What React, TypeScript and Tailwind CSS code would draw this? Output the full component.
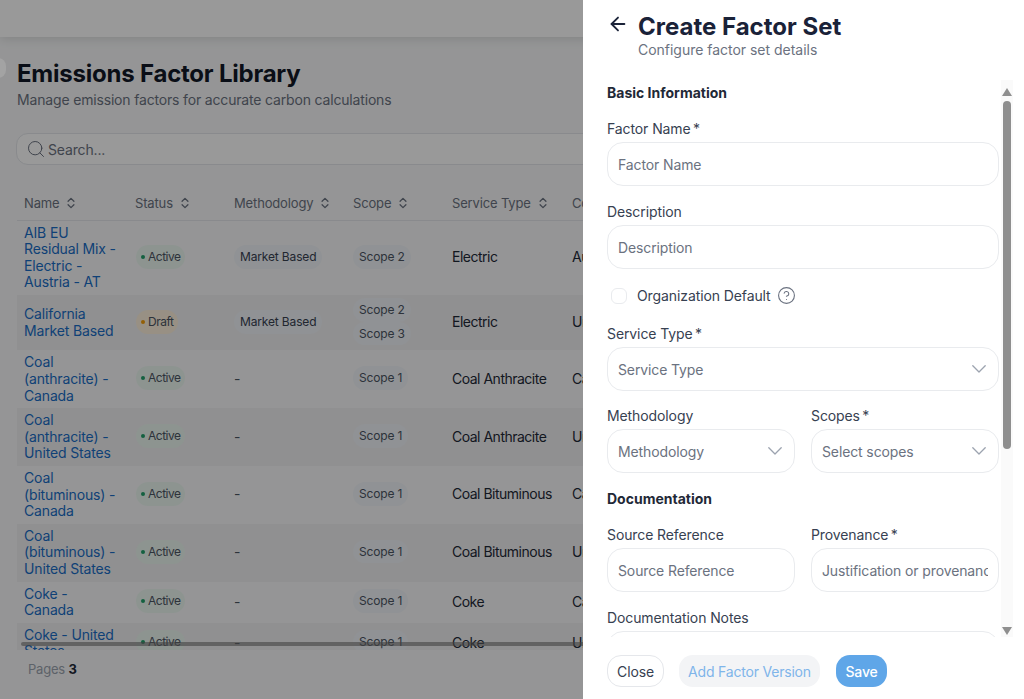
import { ArrowLeft, ChevronsUpDown, CircleHelp, Search } from "lucide-react";

type Row = { name: string; status: "Active" | "Draft"; method: string; scopes: string[]; service: string; country: string };

const rows: Row[] = [
  { name: "AIB EU\nResidual Mix -\nElectric -\nAustria - AT", status: "Active", method: "Market Based", scopes: ["Scope 2"], service: "Electric", country: "Austria" },
  { name: "California\nMarket Based", status: "Draft", method: "Market Based", scopes: ["Scope 2", "Scope 3"], service: "Electric", country: "United States" },
  { name: "Coal\n(anthracite) -\nCanada", status: "Active", method: "-", scopes: ["Scope 1"], service: "Coal Anthracite", country: "Canada" },
  { name: "Coal\n(anthracite) -\nUnited States", status: "Active", method: "-", scopes: ["Scope 1"], service: "Coal Anthracite", country: "United States" },
  { name: "Coal\n(bituminous) -\nCanada", status: "Active", method: "-", scopes: ["Scope 1"], service: "Coal Bituminous", country: "Canada" },
  { name: "Coal\n(bituminous) -\nUnited States", status: "Active", method: "-", scopes: ["Scope 1"], service: "Coal Bituminous", country: "United States" },
  { name: "Coke -\nCanada", status: "Active", method: "-", scopes: ["Scope 1"], service: "Coke", country: "Canada" },
  { name: "Coke - United\nStates", status: "Active", method: "-", scopes: ["Scope 1"], service: "Coke", country: "United States" },
];

const heads = [
  { label: "Name", cls: "w-[110px] pl-[7px]" },
  { label: "Status", cls: "w-[99px] pl-[8px]" },
  { label: "Methodology", cls: "w-[119px] pl-[8px]" },
  { label: "Scope", cls: "w-[99px] pl-[8px]" },
  { label: "Service Type", cls: "w-[120px] pl-[8px]" },
  { label: "Country", cls: "w-[160px] pl-[8px]" },
];

function Chevron() {
  return (
    <svg width="14" height="8" viewBox="0 0 14 8" fill="none" stroke="#9ca3af" strokeWidth="1.3" strokeLinecap="round" strokeLinejoin="round">
      <path d="M0.8 0.8 L7 7 L13.2 0.8" />
    </svg>
  );
}

function Field({ label, placeholder, className }: { label: string; placeholder: string; className?: string }) {
  return (
    <div className={className}>
      <div className="h-5 text-[14px] leading-5 text-[#374151] tracking-[-0.1px]">{label}</div>
      <input
        readOnly
        placeholder={placeholder}
        className="mt-[3px] h-[44px] w-full rounded-[16px] border border-[#e9ebee] bg-white px-[10px] text-[14px] tracking-[-0.12px] outline-none placeholder:text-[#6b7280]"
      />
    </div>
  );
}

function SelectField({ label, placeholder, className }: { label: string; placeholder: string; className?: string }) {
  return (
    <div className={className}>
      <div className="h-5 text-[14px] leading-5 text-[#374151] tracking-[-0.1px]">{label}</div>
      <div className="mt-[3px] flex h-[44px] w-full items-center justify-between rounded-[16px] border border-[#e9ebee] bg-white pl-[10px] pr-[12px] text-[14px] tracking-[-0.12px] text-[#6b7280]">
        <span>{placeholder}</span>
        <Chevron />
      </div>
    </div>
  );
}

export default function App() {
  return (
    <div className="relative h-[699px] w-[1024px] overflow-hidden bg-[#f8f9fa] font-['Inter',sans-serif]">
      {/* page */}
      <div className="h-[37px] bg-white shadow-[0_2px_10px_rgba(0,0,0,0.12)]" />
      <div className="px-[16px] pt-[22px]">
        <h1 className="pl-[1px] text-[24px] font-bold leading-[30px] tracking-[-0.22px] text-[#111827]">Emissions Factor Library</h1>
        <p className="mt-[1px] pl-[1px] text-[14px] leading-5 tracking-[-0.17px] text-[#6b7280]">Manage emission factors for accurate carbon calculations</p>
        <div className="mt-[23px] flex h-[32px] w-[900px] items-center gap-[2px] rounded-[12px] border border-[#e5e7eb] bg-white pl-[9px] text-[14px] tracking-[-0.15px] text-[#6b7280]">
          <Search className="h-[20px] w-[20px]" strokeWidth={1.2} />
          <span>Search...</span>
        </div>
        <div className="ml-[1px] mt-[20px] h-[465px] w-[1000px] overflow-hidden">
          <table className="w-[707px] table-fixed border-collapse text-left text-[14px] tracking-[-0.5px]">
            <thead>
              <tr className="h-[35px] border-b border-[#e5e7eb]">
                {heads.map((h) => (
                  <th key={h.label} className={`${h.cls} pb-0 pr-0 pt-[2px] text-[13px] font-normal tracking-[-0.15px] text-[#6b7280]`}>
                    <span className="inline-flex items-center gap-[5px] whitespace-nowrap">
                      {h.label}
                      <ChevronsUpDown className="h-[14px] w-[14px]" strokeWidth={2.2} />
                    </span>
                  </th>
                ))}
              </tr>
            </thead>
            <tbody>
              {rows.map((r, i) => (
                <tr key={r.name} className={i % 2 === 1 ? "bg-[#f0f1f2]" : ""}>
                  <td className="whitespace-pre-line py-[4px] pl-[7px] pr-[2px] align-middle leading-[16.6px] tracking-[-0.15px] text-[#1a6dc6]">{r.name}</td>
                  <td className="pb-[6px] pl-[9px] pt-[4px] align-middle">
                    <div className="flex">
                      <span
                        className={`flex items-center gap-[3px] rounded-full px-[5px] py-[3px] text-[12px] leading-[18px] ${
                          r.status === "Active" ? "bg-[#ecf7f1] text-[#4b5563]" : "bg-[#fdf0dc] text-[#4b5563]"
                        }`}
                      >
                        <span className={`h-[4px] w-[4px] rounded-full ${r.status === "Active" ? "bg-[#22a06b]" : "bg-[#f59e0b]"}`} />
                        {r.status}
                      </span>
                    </div>
                  </td>
                  <td className="pb-[6px] pl-[8px] pt-[4px] align-middle">
                    {r.method === "-" ? (
                      <span className="text-[#4b5563]">-</span>
                    ) : (
                      <div className="flex">
                        <span className="rounded-full bg-[#f0f3f8] px-[6px] py-[3px] text-[12px] leading-[18px] tracking-[-0.15px] text-[#374151]">{r.method}</span>
                      </div>
                    )}
                  </td>
                  <td className="pb-[5px] pl-[8px] pt-[3px] align-middle">
                    <div className="flex flex-col items-start">
                      {r.scopes.map((s) => (
                        <span key={s} className="rounded-full bg-[#f0f3f8] px-[6px] py-[3px] text-[12px] leading-[17.75px] tracking-[-0.15px] text-[#4b5563]">{s}</span>
                      ))}
                    </div>
                  </td>
                  <td className="whitespace-nowrap pb-[6px] pl-[8px] pt-[4px] align-middle text-[#1f2937]">{r.service}</td>
                  <td className="pb-[6px] pl-[8px] pt-[4px] align-middle text-[#1f2937]">{r.country}</td>
                </tr>
              ))}
            </tbody>
          </table>
        </div>
        <div className="pl-[12px] pt-[9px] text-[13px] leading-5 tracking-[-0.2px] text-[#9ca3af]">
          Pages <span className="font-bold text-[#1f2937]">3</span>
        </div>
      </div>
      {/* horizontal scrollbar of the table */}
      <div className="absolute left-[21px] top-[642px] h-[4px] w-[567px] rounded-full bg-[#6f6f6f]/60" />
      {/* dim layer */}
      <div className="absolute inset-0 bg-black/40" />
      <div className="absolute left-[-10px] top-[58px] h-[20px] w-[16px] rounded-full bg-[#a3a3a3]" />

      {/* drawer */}
      <div className="absolute bottom-0 right-0 top-0 flex w-[441px] flex-col bg-white">
        <div className="flex h-[80px] shrink-0 items-start pl-[24px] pt-[12px]">
          <ArrowLeft className="mt-[1px] h-[22px] w-[22px] text-[#1a2238]" strokeWidth={2} />
          <div className="ml-[9px]">
            <h2 className="text-[24px] font-bold leading-[30px] tracking-[0px] text-[#1a2238]">Create Factor Set</h2>
            <p className="mt-[-1px] text-[14px] leading-[18px] tracking-[-0.02px] text-[#6b7280]">Configure factor set details</p>
          </div>
        </div>
        <div className="relative h-[557px] shrink-0 overflow-hidden pl-[24px] pr-[25px]">
          <div className="pt-[3px] text-[14px] font-bold leading-5 tracking-[0px] text-[#1f2937]">Basic Information</div>
          <Field className="mt-[16px]" label={"Factor Name\u2009*"} placeholder="Factor Name" />
          <Field className="mt-[16px]" label="Description" placeholder="Description" />
          <div className="mt-[16px] flex h-[21px] items-center pl-[4px] text-[14px] tracking-[-0.1px] text-[#374151]">
            <span className="h-[16px] w-[16px] rounded-[6px] border border-[#e9ebee]" />
            <span className="ml-[10px]">Organization Default</span>
            <CircleHelp className="ml-[6px] h-[19px] w-[19px] text-[#6b7280]" strokeWidth={1.4} />
          </div>
          <SelectField className="mt-[18px]" label={"Service Type\u2009*"} placeholder="Service Type" />
          <div className="mt-[15px] grid grid-cols-2 gap-[16px]">
            <SelectField label="Methodology" placeholder="Methodology" />
            <SelectField label={"Scopes\u2009*"} placeholder="Select scopes" />
          </div>
          <div className="mt-[16px] text-[14px] font-bold leading-5 tracking-[0px] text-[#1f2937]">Documentation</div>
          <div className="mt-[16px] grid grid-cols-2 gap-[16px]">
            <Field label="Source Reference" placeholder="Source Reference" />
            <Field label={"Provenance\u2009*"} placeholder="Justification or provenance" />
          </div>
          <Field className="mt-[16px]" label="Documentation Notes" placeholder="" />
          {/* scrollbar */}
          <div className="absolute bottom-0 right-[11px] top-0 flex w-[12px] flex-col items-center bg-[#fafafa] pt-[8px]">
            <span className="h-0 w-0 border-x-[5px] border-b-[8px] border-x-transparent border-b-[#8f8f8f]" />
            <span className="mt-[5px] h-[348px] w-[8px] rounded-full bg-[#8f8f8f]" />
            <span className="mt-auto mb-[2px] h-0 w-0 border-x-[5px] border-t-[8px] border-x-transparent border-t-[#8f8f8f]" />
          </div>
        </div>
        <div className="flex flex-1 items-start pl-[24px] pt-[18px] text-[14px] tracking-[-0.15px]">
          <button className="h-[32px] w-[57px] rounded-[14px] border border-[#e5e7eb] bg-white text-[#374151]">Close</button>
          <button className="ml-[15px] h-[32px] w-[141px] rounded-[14px] bg-[#f3f4f6] tracking-[-0.2px] text-[#7fb5ea]">Add Factor Version</button>
          <button className="ml-[16px] h-[32px] w-[51px] rounded-[14px] bg-[#5fa6e8] font-medium text-white">Save</button>
        </div>
      </div>
    </div>
  );
}
